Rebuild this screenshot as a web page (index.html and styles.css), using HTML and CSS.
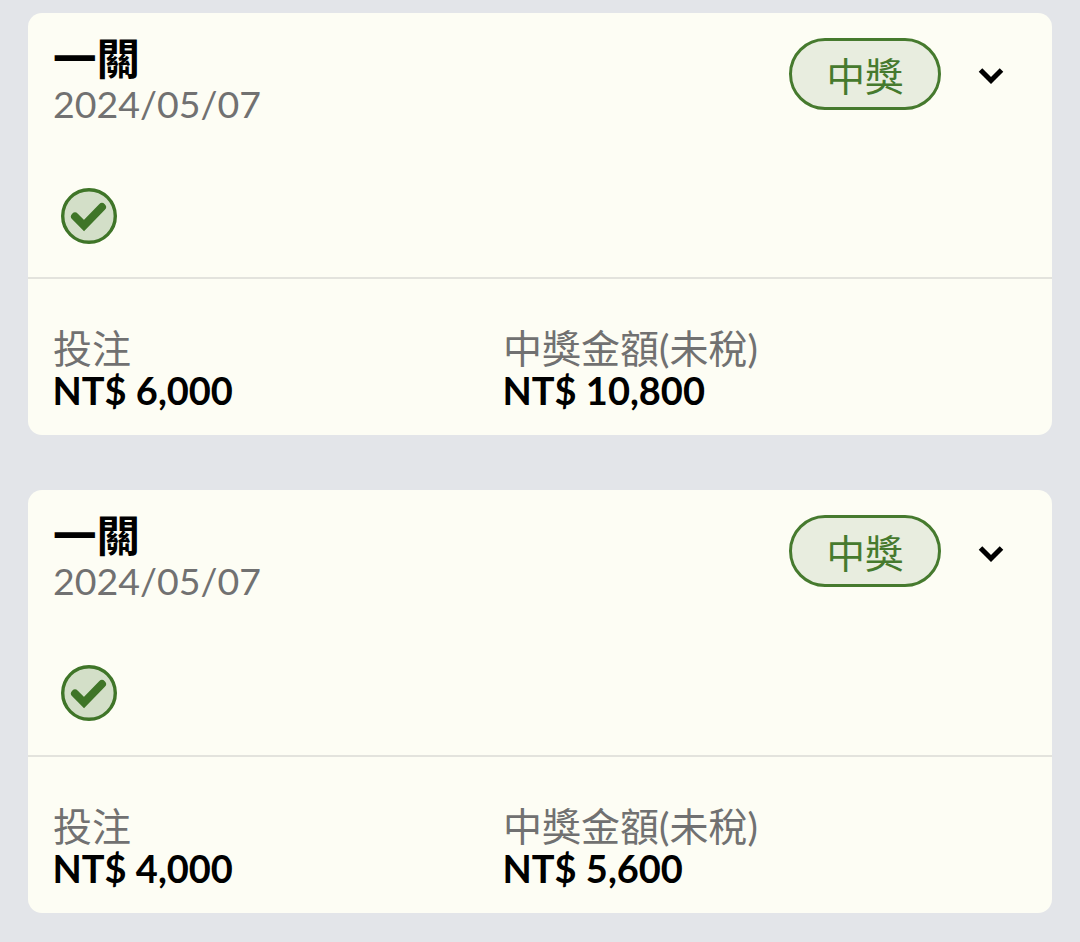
FILE: index.html
```html
<!DOCTYPE html>
<html lang="zh-Hant">
<head>
<meta charset="utf-8">
<title>投注紀錄</title>
<link rel="stylesheet" href="styles.css">
</head>
<body>
<main class="list">
  <section class="card">
    <div class="top">
      <div class="head">
        <div class="titles">
          <div class="title">一關</div>
          <div class="date">2024/05/07</div>
        </div>
        <div class="status">
          <span class="badge">中獎</span>
          <svg class="chevron" viewBox="0 0 28 20" aria-hidden="true"><path d="M3.5 4l10.5 10.5L24.500 4" /></svg>
        </div>
      </div>
      <svg class="check" viewBox="0 0 56 56" aria-hidden="true"><circle class="check-ring" cx="28" cy="28" r="26.300"/><path class="check-mark" d="M14 28.500l9 9L41 19"/></svg>
    </div>
    <div class="bottom">
      <div class="col"><div class="label">投注</div><div class="amount">NT$ 6,000</div></div>
      <div class="col"><div class="label">中獎金額(未稅)</div><div class="amount">NT$ 10,800</div></div>
    </div>
  </section>
  <section class="card">
    <div class="top">
      <div class="head">
        <div class="titles">
          <div class="title">一關</div>
          <div class="date">2024/05/07</div>
        </div>
        <div class="status">
          <span class="badge">中獎</span>
          <svg class="chevron" viewBox="0 0 28 20" aria-hidden="true"><path d="M3.5 4l10.5 10.5L24.500 4" /></svg>
        </div>
      </div>
      <svg class="check" viewBox="0 0 56 56" aria-hidden="true"><circle class="check-ring" cx="28" cy="28" r="26.300"/><path class="check-mark" d="M14 28.500l9 9L41 19"/></svg>
    </div>
    <div class="bottom">
      <div class="col"><div class="label">投注</div><div class="amount">NT$ 4,000</div></div>
      <div class="col"><div class="label">中獎金額(未稅)</div><div class="amount">NT$ 5,600</div></div>
    </div>
  </section>
</main>
</body>
</html>
```

FILE: styles.css
```css
* { box-sizing: border-box; }
html, body { margin: 0; padding: 0; }
body {
  width: 1080px;
  height: 942px;
  overflow: hidden;
  background: #e3e5e9;
  font-family: Lato, "Noto Sans CJK TC", sans-serif;
}
.list {
  display: flex;
  flex-direction: column;
  gap: 55px;
  padding: 12.6px 28px 0;
}
.card {
  height: 422.5px;
  background: #fdfdf4;
  border-radius: 14px;
  overflow: hidden;
}
.top {
  height: 266.8px;
  padding: 22px 25px 0;
  border-bottom: 2px solid #e3e3dd;
}
.head {
  display: flex;
  justify-content: space-between;
  align-items: flex-start;
}
.title {
  font-size: 43.5px;
  line-height: 47px;
  font-weight: 700;
  color: #000;
}
.date {
  font-size: 37.5px;
  line-height: 44px;
  color: #717171;
}
.status {
  display: flex;
  align-items: center;
  gap: 36px;
  padding: 3px 22px 0 0;
}
.badge {
  display: flex;
  align-items: center;
  justify-content: center;
  width: 152px;
  height: 72px;
  border: 3px solid #467a2e;
  border-radius: 36px;
  background: #e8eddf;
  color: #467a2e;
  font-size: 38.5px;
}
.chevron {
  width: 28px;
  height: 20px;
  margin-top: 5px;
  fill: none;
  stroke: #000;
  stroke-width: 5;
}
.check {
  display: block;
  width: 56px;
  height: 56px;
  margin: 62.4px 0 0 8px;
}
.check-ring { fill: #d3dfc8; stroke: #3f7528; stroke-width: 3.4; }
.check-mark { fill: none; stroke: #3f7528; stroke-width: 8; stroke-linecap: round; stroke-linejoin: miter; }
.bottom {
  display: grid;
  grid-template-columns: 450px 1fr;
  padding: 46px 25px 0;
}
.label {
  font-size: 39px;
  line-height: 47px;
  color: #717171;
}
.amount {
  font-size: 38px;
  line-height: 36px;
  font-weight: 700;
  color: #000;
  margin-left: -0.5px;
}
```
